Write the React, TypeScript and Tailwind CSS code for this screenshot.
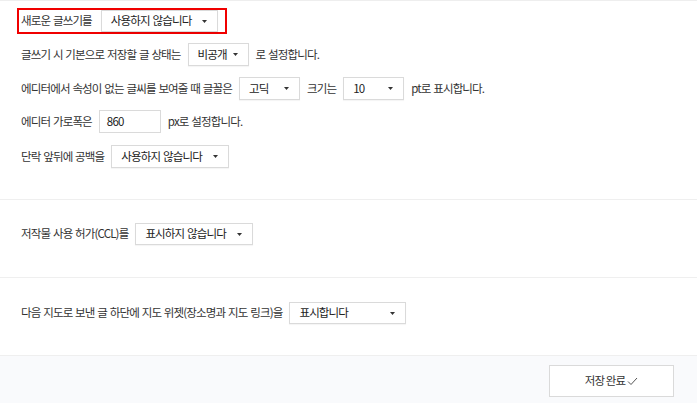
import React from "react";

function Arrow() {
  return (
    <svg width="5" height="3" viewBox="0 0 5 3" className="shrink-0">
      <path d="M0 0 L5 0 L2.5 3 Z" fill="#333" />
    </svg>
  );
}

function Select({ label, w, h = "h-[23px]" }: { label: string; w: string; h?: string }) {
  return (
    <div
      className={`${w} ${h} shrink-0 flex items-center justify-between pl-[9px] pr-[10px] bg-white border border-[#dadada] shadow-[0_1px_1px_rgba(0,0,0,0.04)] text-[#222]`}
    >
      <span>{label}</span>
      <Arrow />
    </div>
  );
}

export default function App() {
  return (
    <div
      className="w-[697px] h-[403px] bg-white border-t border-[#eeeeee] text-[11.5px] tracking-[-0.85px] [word-spacing:1px] text-[#333] overflow-hidden"
      style={{ fontFamily: "'Noto Sans CJK KR', 'Noto Sans', sans-serif" }}
    >
      <div className="pt-[7px] pb-[31px] border-b border-[#efefef]">
        <div className="ml-[17px] inline-flex items-center h-[26px] border-2 border-[#f00000] pl-[2px] pr-[7px] gap-[9px]">
          <span>새로운 글쓰기를</span>
          <Select label="사용하지 않습니다" w="w-[117px]" h="h-[22px]" />
        </div>
        <div className="mt-[9px] pl-[21px] flex items-center h-[23px] gap-[7px]">
          <span>글쓰기 시 기본으로 저장할 글 상태는</span>
          <Select label="비공개" w="w-[61px]" />
          <span>로 설정합니다.</span>
        </div>
        <div className="mt-[11px] pl-[21px] flex items-center h-[23px] gap-[7px]">
          <span>에디터에서 속성이 없는 글씨를 보여줄 때 글꼴은</span>
          <Select label="고딕" w="w-[61px]" />
          <span>크기는</span>
          <Select label="10" w="w-[61px]" />
          <span>pt로 표시합니다.</span>
        </div>
        <div className="mt-[10px] pl-[21px] flex items-center h-[23px] gap-[7px]">
          <span>에디터 가로폭은</span>
          <div className="w-[62px] h-[23px] flex items-center pl-[7px] bg-white border border-[#dadada] text-[#222]">860</div>
          <span>px로 설정합니다.</span>
        </div>
        <div className="mt-[12px] pl-[21px] flex items-center h-[23px] gap-[7px]">
          <span>단락 앞뒤에 공백을</span>
          <Select label="사용하지 않습니다" w="w-[118px]" />
        </div>
      </div>

      <div className="pt-[23px] pb-[32px] border-b border-[#efefef]">
        <div className="pl-[21px] flex items-center h-[22px] gap-[7px]">
          <span>저작물 사용 허가(CCL)를</span>
          <Select label="표시하지 않습니다" w="w-[118px]" h="h-[22px]" />
        </div>
      </div>

      <div className="pt-[24px] pb-[31px] border-b border-[#efefef]">
        <div className="pl-[21px] flex items-center h-[22px] gap-[7px]">
          <span>다음 지도로 보낸 글 하단에 지도 위젯(장소명과 지도 링크)을</span>
          <Select label="표시합니다" w="w-[117px]" h="h-[22px]" />
        </div>
      </div>

      <div className="bg-[#f9fafc] h-[48px] pt-[9px] pr-[23px] flex justify-end items-start">
        <button className="w-[125px] h-[32px] bg-white border border-[#dadada] flex items-center justify-center gap-[2px] text-[#333]">
          <span>저장 완료</span>
          <svg width="11" height="9" viewBox="0 0 11 9">
            <path d="M1 4.5 L4 7.5 L10 1" fill="none" stroke="#555" strokeWidth="1" />
          </svg>
        </button>
      </div>
    </div>
  );
}
